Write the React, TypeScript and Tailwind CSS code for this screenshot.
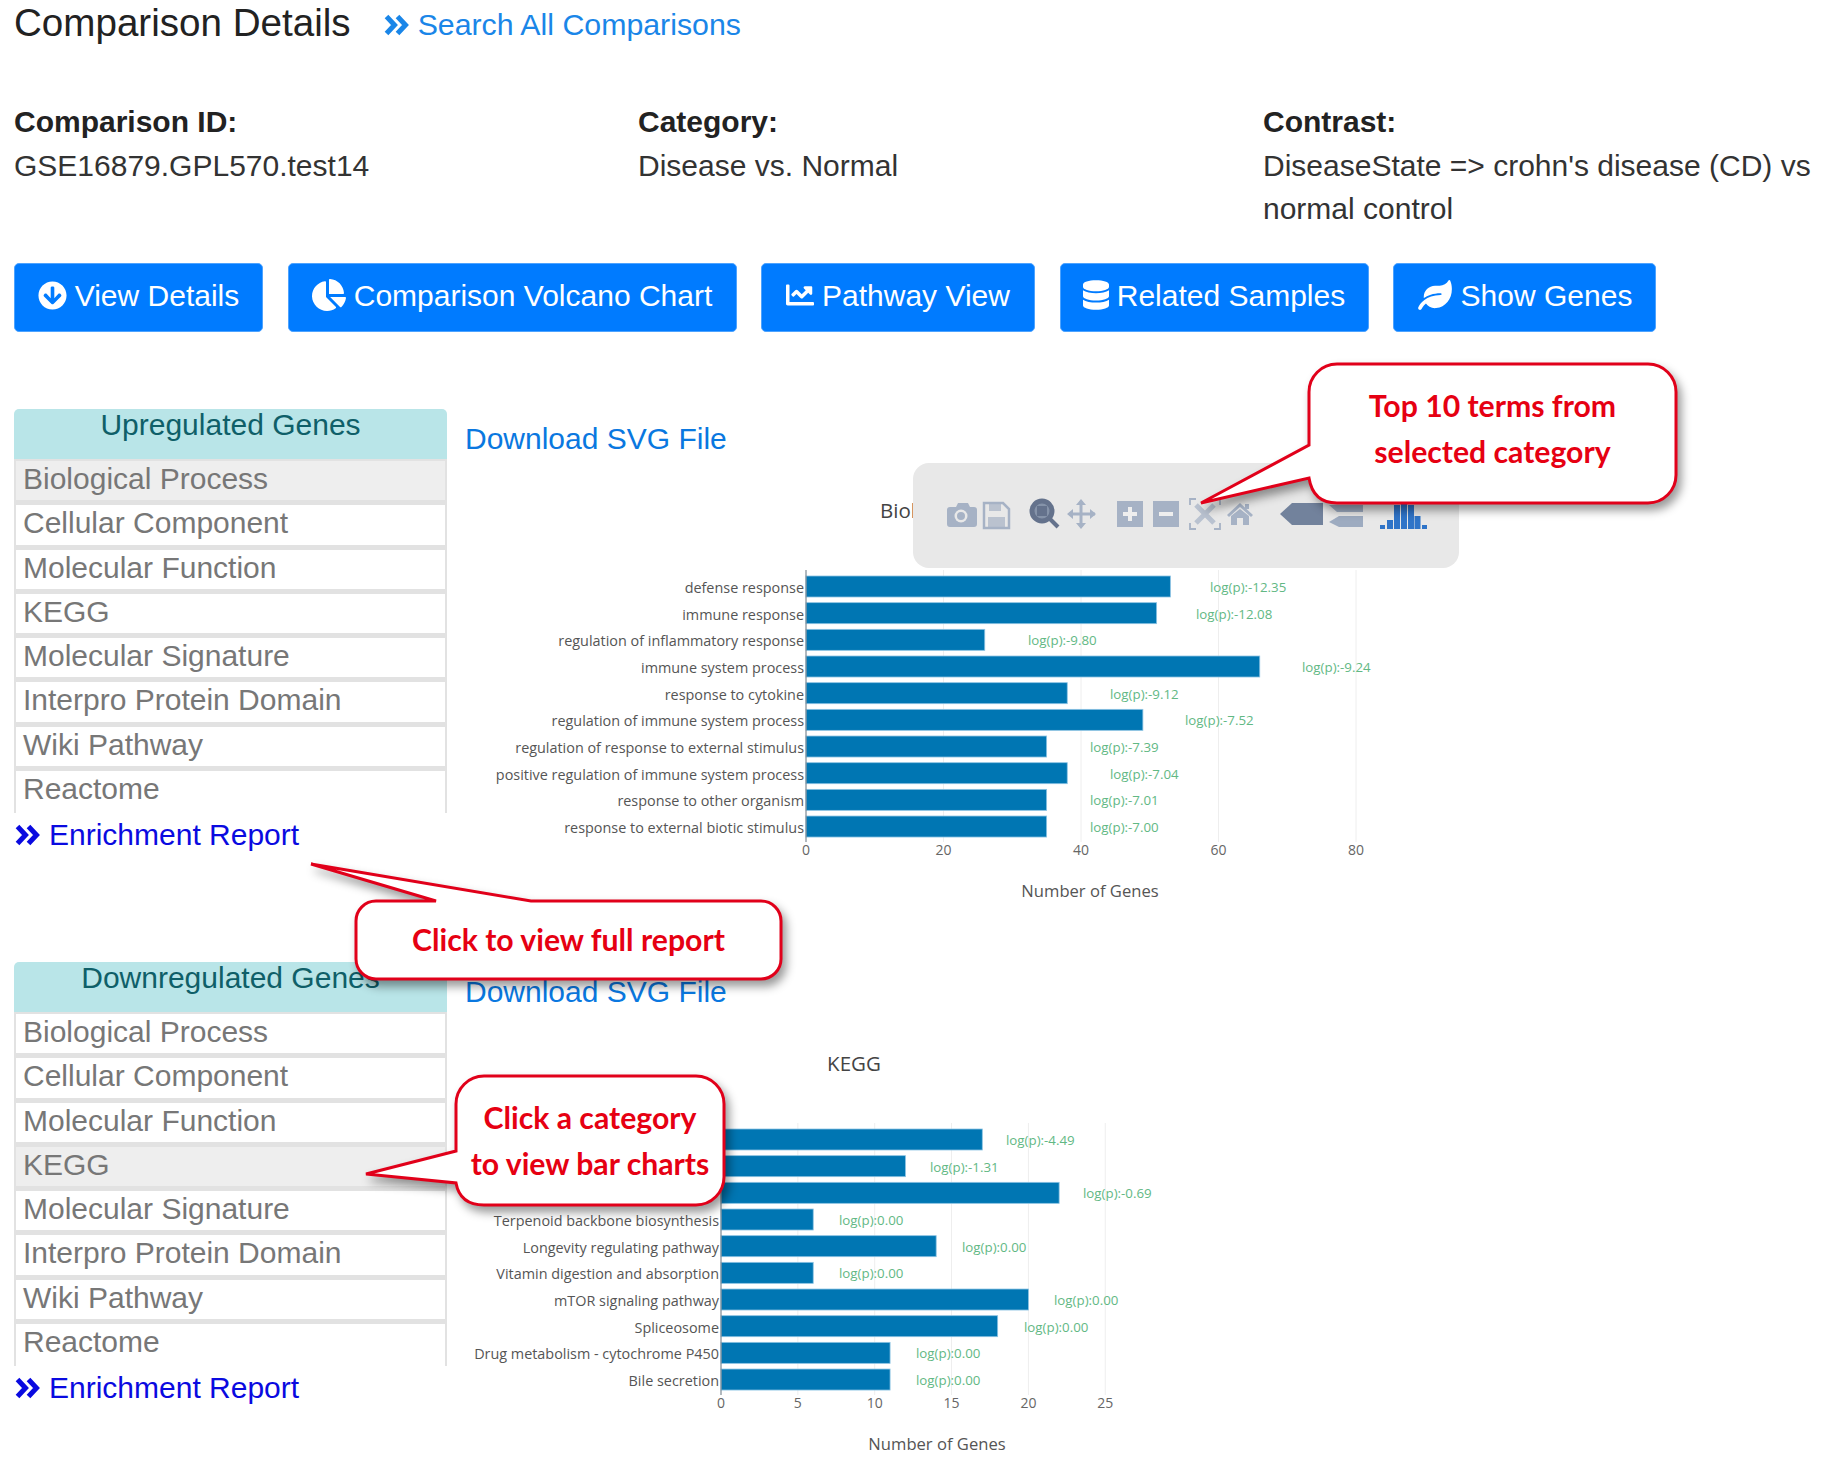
import type { ReactNode } from 'react';
import { FaArrowCircleDown, FaChartLine, FaChartPie, FaDatabase, FaLeaf } from 'react-icons/fa';

const categories = [
  'Biological Process',
  'Cellular Component',
  'Molecular Function',
  'KEGG',
  'Molecular Signature',
  'Interpro Protein Domain',
  'Wiki Pathway',
  'Reactome',
];

type Row = { label: string; value: number; log: string; logX: number };

const upRows: Row[] = [
  { label: 'defense response', value: 53, log: 'log(p):-12.35', logX: 1210 },
  { label: 'immune response', value: 51, log: 'log(p):-12.08', logX: 1196 },
  { label: 'regulation of inflammatory response', value: 26, log: 'log(p):-9.80', logX: 1028 },
  { label: 'immune system process', value: 66, log: 'log(p):-9.24', logX: 1302 },
  { label: 'response to cytokine', value: 38, log: 'log(p):-9.12', logX: 1110 },
  { label: 'regulation of immune system process', value: 49, log: 'log(p):-7.52', logX: 1185 },
  { label: 'regulation of response to external stimulus', value: 35, log: 'log(p):-7.39', logX: 1090 },
  { label: 'positive regulation of immune system process', value: 38, log: 'log(p):-7.04', logX: 1110 },
  { label: 'response to other organism', value: 35, log: 'log(p):-7.01', logX: 1090 },
  { label: 'response to external biotic stimulus', value: 35, log: 'log(p):-7.00', logX: 1090 },
];

const keggRows: Row[] = [
  { label: '', value: 17, log: 'log(p):-4.49', logX: 1006 },
  { label: '', value: 12, log: 'log(p):-1.31', logX: 930 },
  { label: '', value: 22, log: 'log(p):-0.69', logX: 1083 },
  { label: 'Terpenoid backbone biosynthesis', value: 6, log: 'log(p):0.00', logX: 839 },
  { label: 'Longevity regulating pathway', value: 14, log: 'log(p):0.00', logX: 962 },
  { label: 'Vitamin digestion and absorption', value: 6, log: 'log(p):0.00', logX: 839 },
  { label: 'mTOR signaling pathway', value: 20, log: 'log(p):0.00', logX: 1054 },
  { label: 'Spliceosome', value: 18, log: 'log(p):0.00', logX: 1024 },
  { label: 'Drug metabolism - cytochrome P450', value: 11, log: 'log(p):0.00', logX: 916 },
  { label: 'Bile secretion', value: 11, log: 'log(p):0.00', logX: 916 },
];

function Chevrons() {
  return (
    <svg viewBox="0 0 25 22" className="h-[22px] w-[25px] shrink-0" fill="none" stroke="currentColor" strokeWidth="5">
      <path d="M2.500 2.500L10.500 11L2.500 19.500M13.500 2.500L21.500 11L13.500 19.500" />
    </svg>
  );
}

function Sidebar({ title, active }: { title: string; active: string }) {
  return (
    <div className="w-[433px] shrink-0">
      <div className="h-[50px] rounded-t-[5px] bg-[#b9e5e8] text-center text-[30px] leading-[32px] text-[#0f5f68]">
        {title}
      </div>
      <div className="h-[354px] overflow-hidden border-x-2 border-t-2 border-[#e2e2e2]">
        {categories.map((c) => (
          <div
            key={c}
            className={`h-[44.3px] border-b-[5px] border-[#e2e2e2] pl-[7px] text-[30px] leading-[36px] text-[#777777] last:h-[60px] last:border-b-0 ${
              c === active ? 'bg-[#eeeeee]' : 'bg-white'
            }`}
          >
            {c}
          </div>
        ))}
      </div>
      <div className="flex h-[45px] items-center gap-[9px] pb-[2px] pl-[1px] text-[30px] text-[#0a0ae0]">
        <Chevrons />
        Enrichment Report
      </div>
    </div>
  );
}

// coordinates below are shared by both charts: 467 is the top of the svg
function BarChart({
  rows,
  x0,
  unit,
  ticks,
  title,
  titleX,
  titleAnchor,
  xLabelX,
}: {
  rows: Row[];
  x0: number;
  unit: number;
  ticks: number[];
  title: string;
  titleX: number;
  titleAnchor: 'start' | 'middle';
  xLabelX: number;
}) {
  return (
    <svg viewBox="465 467 1357 440" className="h-[440px] w-[1357px]" style={{ fontFamily: '"Open Sans", sans-serif' }}>
      <text x={titleX} y={518} textAnchor={titleAnchor} fontSize={20.500} fill="#444444">
        {title}
      </text>
      {ticks.map((t) => (
        <g key={t}>
          {t > 0 && <line x1={x0 + t * unit} x2={x0 + t * unit} y1={570} y2={842} stroke="#eeeeee" />}
          <text x={x0 + t * unit} y={855} textAnchor="middle" fontSize={14} fill="#666666">
            {t}
          </text>
        </g>
      ))}
      {rows.map((r, i) => {
        const y = 576 + i * 26.67;
        return (
          <g key={r.log + i}>
            <rect x={x0} y={y} width={r.value * unit} height={21} fill="#0076b3" stroke="#8cc3e3" strokeWidth={0.8} />
            <text x={x0 - 2} y={y + 17} textAnchor="end" fontSize={14.400} fill="#555555">
              {r.label}
            </text>
            <text x={r.logX} y={y + 16} fontSize={13.300} fill="#62b884">
              {r.log}
            </text>
          </g>
        );
      })}
      <line x1={x0} x2={x0} y1={570} y2={842} stroke="#7d8a94" strokeWidth={1.2} />
      <text x={xLabelX} y={897} textAnchor="middle" fontSize={16.600} fill="#555555">
        Number of Genes
      </text>
    </svg>
  );
}

function Toolbar() {
  const light = '#a6b2c5';
  return (
    <div className="absolute left-[448px] top-[-4px] h-[105px] w-[546px] rounded-[16px] bg-[#e8e8e8]">
      <svg viewBox="913 463 546 105" className="h-[105px] w-[546px]">
        {/* camera */}
        <path d="M947 510a3 3 0 0 1 3-3h6l2-4h10l2 4h4a3 3 0 0 1 3 3v14a3 3 0 0 1-3 3h-24a3 3 0 0 1-3-3z" fill={light} />
        <circle cx="961" cy="516" r="6.500" fill="#e8e8e8" />
        <circle cx="961" cy="516" r="4" fill={light} />
        {/* save */}
        <path d="M984 503h19l6 6v19h-25z" fill="none" stroke={light} strokeWidth="2.500" />
        <path d="M989 503h12v8h-12zM988 517h17v10h-17z" fill={light} opacity="0.7" />
        {/* zoom */}
        <circle cx="1042" cy="511" r="10" fill="#8593a9" stroke="#64728c" strokeWidth="5" />
        <rect x="1037" y="506" width="10" height="10" fill="#64728c" />
        <line x1="1050" y1="519" x2="1058" y2="527" stroke="#64728c" strokeWidth="4" />
        {/* pan */}
        <path d="M1081 501v26M1069 514h26" stroke={light} strokeWidth="3" />
        <path d="M1081 499l-5 6h10zM1081 529l-5-6h10zM1067 514l6-5v10zM1096 514l-6-5v10z" fill={light} />
        {/* zoom in, zoom out */}
        <rect x="1117" y="501" width="26" height="26" fill={light} />
        <path d="M1130 507v14M1123 514h14" stroke="#eeeeee" strokeWidth="4" />
        <rect x="1153" y="501" width="26" height="26" fill={light} />
        <path d="M1159 514h14" stroke="#eeeeee" strokeWidth="4" />
        {/* autoscale */}
        <path d="M1196 499h-6v6M1214 499h6v6M1196 529h-6v-6M1214 529h6v-6" fill="none" stroke={light} strokeWidth="1.800" />
        <path d="M1196 505l18 18M1214 505l-18 18" stroke="#b9c2d0" strokeWidth="5" />
        {/* home */}
        <path d="M1227 515l13-12 13 12-2 2-11-10-11 10z" fill={light} />
        <path d="M1231 516l9-7 9 7v9h-6v-7h-6v7h-6zM1245 504h4v5h-4z" fill={light} />
        {/* hover closest, hover compare */}
        <path d="M1280 514l12-11h31v22h-31z" fill="#72829c" />
        <path d="M1329 505h34v7h-26zM1329 522l10-6h24v11h-24z" fill="#9dabc0" />
        {/* bars */}
        <path
          d="M1380 525h5v4h-5zM1387 520h6v9h-6zM1394 505h6v24h-6zM1401 503h6v26h-6zM1408 505h6v24h-6zM1414.500 516h6v13h-6zM1422 525h5v4h-5z"
          fill="#2f74c8"
        />
      </svg>
    </div>
  );
}

function Callout({
  className,
  path,
  viewBox,
  children,
}: {
  className: string;
  path: string;
  viewBox: string;
  children: ReactNode;
}) {
  return (
    <div
      className={`absolute z-10 flex items-center justify-center text-center text-[30.2px] font-bold leading-[46px] text-[#e60012] ${className}`}
      style={{ fontFamily: 'Lato, sans-serif' }}
    >
      <svg viewBox={viewBox} className="absolute inset-0 h-full w-full overflow-visible drop-shadow-[4px_6px_5px_rgba(0,0,0,0.4)]">
        <path d={path} fill="white" stroke="#e1001a" strokeWidth="3" />
      </svg>
      <div className="relative">{children}</div>
    </div>
  );
}

export default function App() {
  const buttons = [
    { label: 'View Details', icon: <FaArrowCircleDown className="h-[29px] w-[29px]" />, w: 'w-[249px]' },
    { label: 'Comparison Volcano Chart', icon: <FaChartPie className="h-[34px] w-[34px]" />, w: 'w-[449px]' },
    { label: 'Pathway View', icon: <FaChartLine className="h-[28px] w-[28px]" />, w: 'w-[274px]' },
    { label: 'Related Samples', icon: <FaDatabase className="h-[30px] w-[26px]" />, w: 'w-[309px]' },
    { label: 'Show Genes', icon: <FaLeaf className="h-[30px] w-[36px]" />, w: 'w-[263px]' },
  ];

  return (
    <div className="relative h-[1464px] w-[1822px] overflow-hidden bg-white pl-[14px]" style={{ fontFamily: '"Liberation Sans", sans-serif' }}>
      <div className="flex h-[46px] items-center">
        <h1 className="text-[38.6px] text-[#222222]">Comparison Details</h1>
        <div className="ml-[33px] mt-[4px] flex items-center gap-[9px] text-[30.3px] text-[#1a86e8]">
          <Chevrons />
          Search All Comparisons
        </div>
      </div>

      <div className="mt-[54px] grid grid-cols-[624px_625px_559px] text-[30px] leading-[43.5px] text-[#333333]">
        <div>
          <div className="font-bold text-[#222222]">Comparison ID:</div>
          <div>GSE16879.GPL570.test14</div>
        </div>
        <div>
          <div className="font-bold text-[#222222]">Category:</div>
          <div>Disease vs. Normal</div>
        </div>
        <div>
          <div className="font-bold text-[#222222]">Contrast:</div>
          <div>DiseaseState =&gt; crohn's disease (CD) vs normal control</div>
        </div>
      </div>

      <div className="mt-[32.5px] flex gap-[24.5px]">
        {buttons.map((b) => (
          <button
            key={b.label}
            className={`flex h-[69px] items-center justify-center gap-[8px] rounded-[5px] border border-[#4da3ff] bg-[#007bff] pb-[5px] text-[30px] text-white ${b.w}`}
          >
            {b.icon}
            {b.label}
          </button>
        ))}
      </div>

      <section className="mt-[77px] flex h-[553px] gap-[18px]">
        <Sidebar title="Upregulated Genes" active="Biological Process" />
        <div>
          <div className="flex h-[58px] items-center text-[30px] text-[#0a78e0]">Download SVG File</div>
          <div className="relative">
            <BarChart
              rows={upRows}
              x0={806}
              unit={6.875}
              ticks={[0, 20, 40, 60, 80]}
              title="Biological Process"
              titleX={880}
              titleAnchor="start"
              xLabelX={1090}
            />
            <Toolbar />
          </div>
        </div>
      </section>

      <section className="flex gap-[18px]">
        <Sidebar title="Downregulated Genes" active="KEGG" />
        <div>
          <div className="flex h-[58px] items-center text-[30px] text-[#0a78e0]">Download SVG File</div>
          <BarChart
            rows={keggRows}
            x0={721}
            unit={15.37}
            ticks={[0, 5, 10, 15, 20, 25]}
            title="KEGG"
            titleX={854}
            titleAnchor="middle"
            xLabelX={937}
          />
        </div>
      </section>

      <Callout
        className="left-[1309px] top-[364px] h-[139px] w-[367px] pb-[11px]"
        viewBox="0 0 367 139"
        path="M28 0H339A28 28 0 0 1 367 28V111A28 28 0 0 1 339 139H28Q4 139 0 114L-108 139L0 81V28A28 28 0 0 1 28 0Z"
      >
        Top 10 terms from
        <br />
        selected category
      </Callout>
      <Callout
        className="left-[356px] top-[901px] h-[78px] w-[425px] pb-[2px]"
        viewBox="0 0 425 78"
        path="M20 0H80L-45 -37L175 0H405A20 20 0 0 1 425 20V58A20 20 0 0 1 405 78H20A20 20 0 0 1 0 58V20A20 20 0 0 1 20 0Z"
      >
        Click to view full report
      </Callout>
      <Callout
        className="left-[456px] top-[1076px] h-[129px] w-[268px] pb-[2px]"
        viewBox="0 0 268 129"
        path="M28 0H240A28 28 0 0 1 268 28V101A28 28 0 0 1 240 129H28Q4 129 0 107L-90 98L0 75V28A28 28 0 0 1 28 0Z"
      >
        Click a category
        <br />
        to view bar charts
      </Callout>
    </div>
  );
}
